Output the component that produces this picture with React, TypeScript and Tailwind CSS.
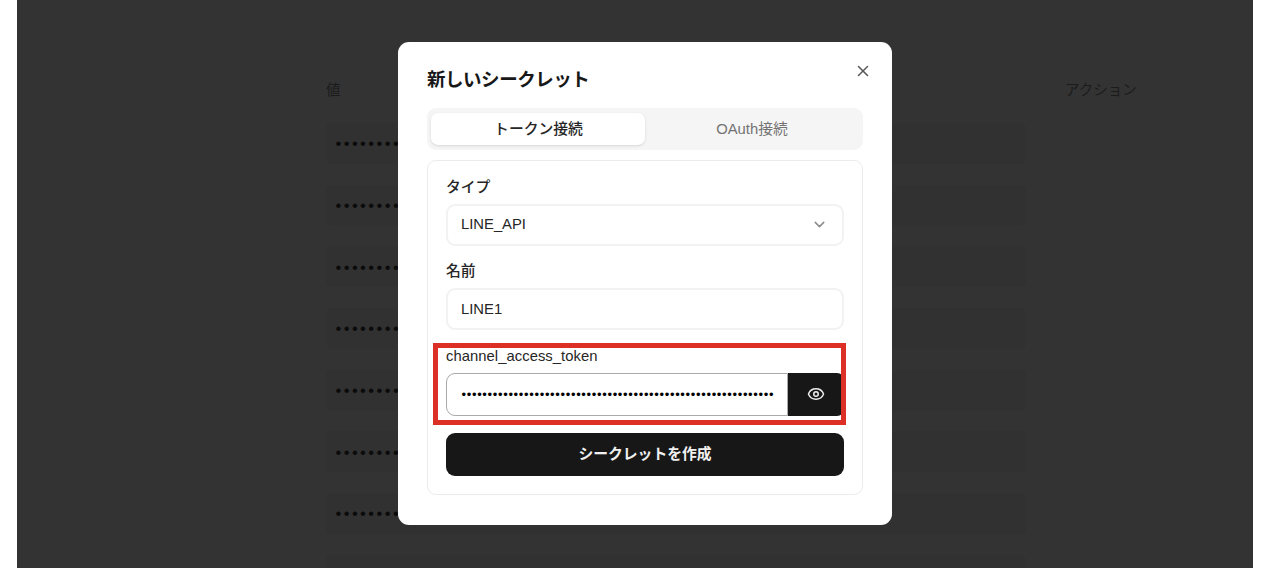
import { ChevronDown, Eye, X } from 'lucide-react';

const maskedValue = '•'.repeat(8);
const maskedToken = '•'.repeat(60);

// the last row is only partly visible, so it has no value
const secretRows = [
  { id: 1, value: maskedValue },
  { id: 2, value: maskedValue },
  { id: 3, value: maskedValue },
  { id: 4, value: maskedValue },
  { id: 5, value: maskedValue },
  { id: 6, value: maskedValue },
  { id: 7, value: maskedValue },
  { id: 8, value: '' },
];

function SecretsTable() {
  return (
    <div className="h-full pl-[309px] pt-[80px]">
      <div className="flex h-[21px] items-center text-[14.5px] leading-none text-[#1b1b1b]">
        <span className="w-[739px]">値</span>
        <span>アクション</span>
      </div>
      <div className="mt-[22px] flex flex-col gap-[20.7px]">
        {secretRows.map((row) => (
          <div
            key={row.id}
            className="flex h-[41px] w-[700px] shrink-0 items-center rounded-md bg-[#313131] pl-[9.5px] text-[16.5px] leading-none tracking-[2.43px] text-[#0b0b0b]"
          >
            {row.value}
          </div>
        ))}
      </div>
    </div>
  );
}

function SecretDialog() {
  return (
    <div className="absolute left-[381px] top-[42px] h-[482.5px] w-[494px] rounded-[11px] bg-white px-[29px] pt-[27px] text-[14.8px] leading-none text-[#262626]">
      <div className="flex h-[39px] items-start justify-between">
        <h2 className="text-[18.5px] font-bold leading-[22px] tracking-[-0.025em] text-[#171717]">新しいシークレット</h2>
        <button className="-mr-[9px] -mt-[7px]">
          <X size={18} strokeWidth={2} className="text-[#555]" />
        </button>
      </div>

      <div className="flex h-[42px] rounded-[9px] bg-[#f5f5f5] px-1 py-[5px]">
        <button className="flex-1 rounded-[7px] bg-white font-medium shadow-sm">
          <span className="ml-px">トークン接続</span>
        </button>
        <button className="flex-1 text-[#737373]">OAuth接続</button>
      </div>

      <div className="mt-[10px] h-[335px] rounded-[9px] border border-[#ececec] px-[18px] pt-[18px]">
        <label className="block h-[17px] font-medium leading-[17px]">タイプ</label>
        <div className="mt-[8px] flex h-[42px] items-center justify-between rounded-[9px] border-2 border-[#f2f2f2] px-[13px] pb-px">
          <span>LINE_API</span>
          <ChevronDown size={17} className="mr-px text-[#8a8a8a]" />
        </div>

        <label className="mt-[17px] block h-[17px] font-medium leading-[17px]">名前</label>
        <div className="mt-[8px] flex h-[42px] items-center rounded-[9px] border-2 border-[#f2f2f2] px-[13px]">LINE1</div>

        <div className="relative mt-[17px]">
          <label className="block h-[17px] pt-px leading-[17px] tracking-[0.05px]">channel_access_token</label>
          <div className="mt-[9px] flex h-[43px]">
            <div className="flex w-[342px] items-center rounded-l-[9px] border border-[#aaa] pl-[14.5px] text-[13px] tracking-[0.66px] text-black">
              {maskedToken}
            </div>
            <button className="flex flex-1 items-center justify-center rounded-r-[7px] bg-[#171717] pb-px">
              <Eye size={18} className="text-[#eee]" />
            </button>
          </div>
          <div className="absolute -left-[13px] -top-[4px] h-[82px] w-[413px] border-5 border-[#dc3027]" />
        </div>

        <button className="mt-[17px] h-[43px] w-full rounded-[9px] bg-[#171717] font-bold text-[#f0f0f0]">
          シークレットを作成
        </button>
      </div>
    </div>
  );
}

export default function App() {
  return (
    <div className="h-[576px] overflow-hidden bg-white pl-[17px] font-['Liberation_Sans','Noto_Sans_CJK_JP',sans-serif]">
      <div className="relative h-[568px] w-[1236px] overflow-hidden bg-[#333]">
        <SecretsTable />
        <SecretDialog />
      </div>
    </div>
  );
}
